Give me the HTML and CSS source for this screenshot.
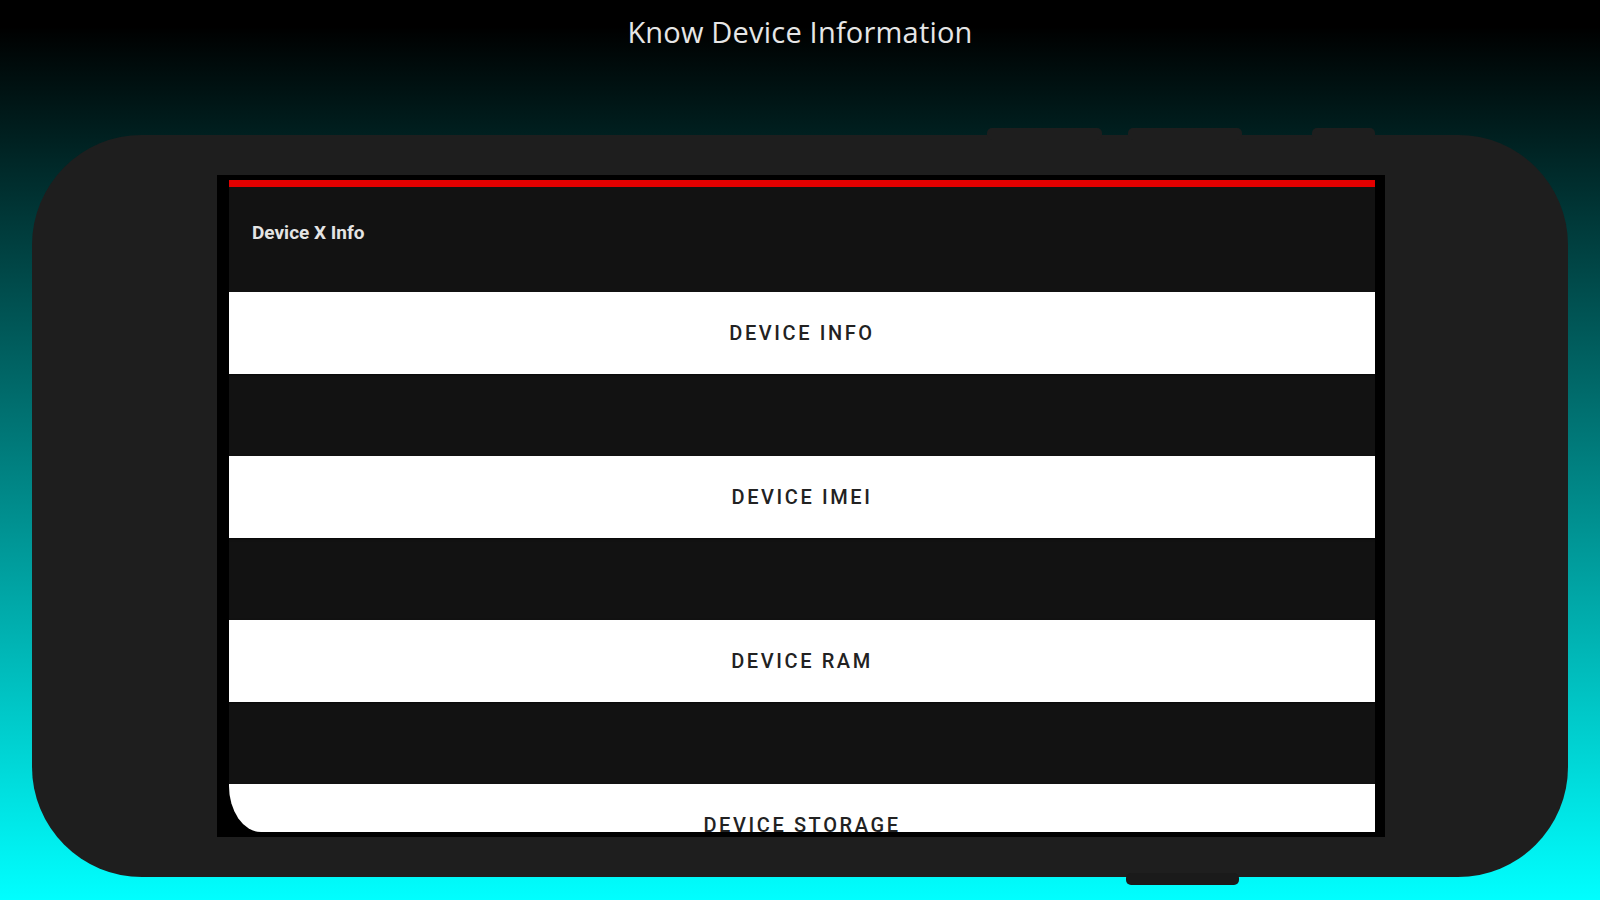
FILE: index.html
```html
<!DOCTYPE html>
<html lang="en">
<head>
    <meta charset="UTF-8">
    <meta name="viewport" content="width=device-width, initial-scale=1.0">
    <title>Know Device Information</title>
    <link rel="stylesheet" href="styles.css">
</head>

<body>
    <div class="page">
        <h1 class="title">Know Device Information</h1>

        <div class="phone">
            <!-- side keys -->
            <span class="key k1"></span>
            <span class="key k2"></span>
            <span class="key k3"></span>
            <span class="key kb"></span>

            <div class="screen">
                <div class="app">
                    <div class="bar"></div>
                    <div class="toolbar">Device X Info</div>
                    <div class="list">
                        <div class="btn">DEVICE INFO</div>
                        <div class="btn">DEVICE IMEI</div>
                        <div class="btn">DEVICE RAM</div>
                        <div class="btn">DEVICE STORAGE</div>
                    </div>
                </div>
            </div>
        </div>
    </div>
</body>
</html>
```

FILE: styles.css
```css
html, body {
    margin: 0;
    padding: 0;
}
body {
    width: 1600px;
    height: 900px;
    overflow: hidden;
    background: linear-gradient(to bottom, #000000 0%, #000000 3%, #00ffff 100%);
    font-family: Roboto, 'Liberation Sans', sans-serif;
}
.page {
    display: flex;
    flex-direction: column;
    align-items: center;
}
.title {
    margin: 0;
    padding-top: 12px;
    line-height: 40px;
    font-family: 'Open Sans', 'DejaVu Sans', sans-serif;
    font-weight: 400;
    font-size: 29px;
    letter-spacing: 0.2px;
    color: #e6e6e6;
}
.phone {
    position: relative;
    box-sizing: border-box;
    width: 1536px;
    height: 742px;
    margin-top: 83px;
    padding: 40px 183px 40px 185px;
    background-color: #1e1e1e;
    border-radius: 110px;
}
.key {
    position: absolute;
    background-color: #1e1e1e;
    border-radius: 5px;
    height: 12px;
}
.k1 { top: -7px; left: 955px; width: 115px; }
.k2 { top: -7px; left: 1096px; width: 114px; }
.k3 { top: -7px; left: 1280px; width: 63px; }
.kb { bottom: -8px; left: 1094px; width: 113px; background-color: #1a1a1a; }

.screen {
    box-sizing: border-box;
    width: 1168px;
    height: 662px;
    padding: 5px 10px 5px 12px;
    background-color: #000000;
}
.app {
    height: 652px;
    overflow: hidden;
    background-color: #121212;
    border-bottom-left-radius: 32px 46px;
}
.bar {
    height: 7px;
    background-color: #e30000;
}
.toolbar {
    height: 105px;
    box-sizing: border-box;
    padding: 34px 0 0 23px;
    line-height: 24px;
    font-size: 19px;
    font-weight: 700;
    color: #e4e4e4;
}
.list {
    display: flex;
    flex-direction: column;
    gap: 82px;
}
.btn {
    flex: none;
    height: 82px;
    display: flex;
    align-items: center;
    justify-content: center;
    background-color: #ffffff;
    box-shadow: 0 1px 2px rgba(0, 0, 0, 0.6);
    font-size: 20px;
    font-weight: 500;
    letter-spacing: 2.6px;
    color: #222222;
}
```
